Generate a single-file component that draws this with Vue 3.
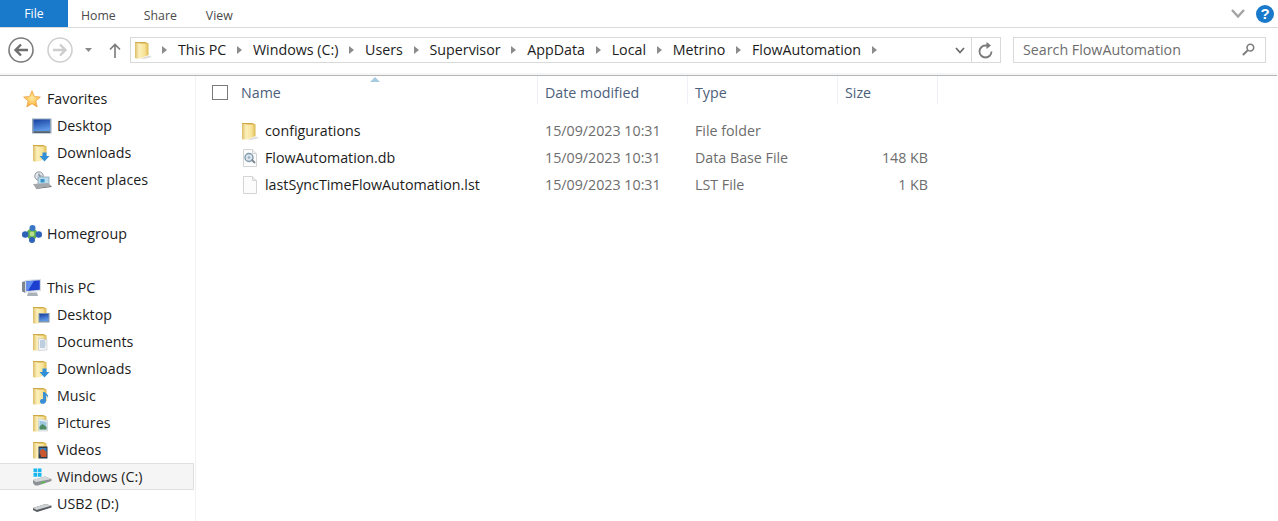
<script setup>
const crumbs = ['This PC', 'Windows (C:)', 'Users', 'Supervisor', 'AppData', 'Local', 'Metrino', 'FlowAutomation']
const tree = [
  { label: 'Favorites', icon: 'star', top: true },
  { label: 'Desktop', icon: 'monitor' },
  { label: 'Downloads', icon: 'f-down' },
  { label: 'Recent places', icon: 'recent' },
  { spacer: true },
  { label: 'Homegroup', icon: 'home', top: true },
  { spacer: true },
  { label: 'This PC', icon: 'pc', top: true },
  { label: 'Desktop', icon: 'f-desk' },
  { label: 'Documents', icon: 'f-doc' },
  { label: 'Downloads', icon: 'f-down' },
  { label: 'Music', icon: 'f-music' },
  { label: 'Pictures', icon: 'f-pic' },
  { label: 'Videos', icon: 'f-vid' },
  { label: 'Windows (C:)', icon: 'drive-c', selected: true },
  { label: 'USB2 (D:)', icon: 'drive-d' }
]
const files = [
  { name: 'configurations', icon: 'folder', date: '15/09/2023 10:31', type: 'File folder', size: '' },
  { name: 'FlowAutomation.db', icon: 'dbfile', date: '15/09/2023 10:31', type: 'Data Base File', size: '148 KB' },
  { name: 'lastSyncTimeFlowAutomation.lst', icon: 'blank', date: '15/09/2023 10:31', type: 'LST File', size: '1 KB' }
]
</script>

<template>
  <div class="window">
    <svg class="defs" width="0" height="0">
      <defs>
        <linearGradient id="fg" x1="0" y1="0" x2="1" y2="0">
          <stop offset="0" stop-color="#dcbd66" /><stop offset="0.3" stop-color="#fcf0bc" /><stop offset="0.72" stop-color="#f7e296" /><stop offset="1" stop-color="#dcb850" />
        </linearGradient>
        <linearGradient id="scr" x1="0" y1="0" x2="0.3" y2="1">
          <stop offset="0" stop-color="#17409f" /><stop offset="1" stop-color="#5c97e6" />
        </linearGradient>
        <radialGradient id="starg" cx="0.5" cy="0.45" r="0.55">
          <stop offset="0" stop-color="#fdeaa2" /><stop offset="0.6" stop-color="#fbc85c" /><stop offset="1" stop-color="#f2a044" />
        </radialGradient>
        <symbol id="folderbase" viewBox="0 0 18 18">
          <path d="M1 1 H11 L14.5 2.5 V14 L6.5 17.5 H2 Q1 17.5 1 16.5 Z" fill="url(#fg)" />
          <path d="M1 1 H11 L14.5 2.5 H6 L4 2 H1 Z" fill="#cfa945" />
        </symbol>
        <symbol id="folder" viewBox="0 0 18 18">
          <path d="M7 17.5 L15 14.5 L18 16 L10 18 Z" fill="#dcdcdc" />
          <use href="#folderbase" width="18" height="18" />
        </symbol>
        <symbol id="star" viewBox="0 0 18 18">
          <path d="M9 .8 L11.4 6.4 L17.4 7 L12.9 11 L14.2 17 L9 13.8 L3.8 17 L5.1 11 L.6 7 L6.6 6.4 Z" fill="url(#starg)" stroke="#ec9e42" stroke-width=".7" />
        </symbol>
        <symbol id="monitor" viewBox="0 0 20 18">
          <rect x="0" y="1.5" width="19.5" height="15" fill="#94a6b8" />
          <rect x="1.5" y="2.5" width="16.5" height="11.5" fill="url(#scr)" />
          <rect x="1.5" y="14.4" width="16.5" height="1.4" fill="#44525f" />
        </symbol>
        <symbol id="f-down" viewBox="0 0 20 18">
          <use href="#folderbase" width="18" height="18" />
          <path d="M10.5 8.5 H14.5 V12 H17.5 L12.5 17.5 L7.5 12 H10.5 Z" fill="#2f8fd8" />
        </symbol>
        <symbol id="recent" viewBox="0 0 20 18">
          <circle cx="7" cy="5" r="4.2" fill="#e3e8ec" stroke="#8b959f" />
          <path d="M7 2.5 V5 H9.5" fill="none" stroke="#6d7780" />
          <rect x="6" y="6" width="11" height="7.5" fill="#b9dcee" stroke="#7f98a8" stroke-width=".7" />
          <rect x="8.5" y="8" width="4" height="3.5" fill="#3c93c9" />
          <path d="M1 13 L16 12 L19.5 15 L4 17.5 Z" fill="#a6a9ac" />
          <path d="M4 17.5 L19.5 15 V16 L4 18 Z" fill="#5f6468" />
        </symbol>
        <symbol id="home" viewBox="0 0 20 18">
          <circle cx="10" cy="9" r="5.5" fill="#62b254" />
          <circle cx="10.5" cy="3" r="3" fill="#3a76c4" />
          <circle cx="3.2" cy="9.5" r="3.2" fill="#2d62b8" />
          <circle cx="16.8" cy="9.5" r="3.2" fill="#2d62b8" />
          <circle cx="10" cy="15" r="3" fill="#2d62b8" />
          <circle cx="10" cy="9" r="2.4" fill="#b6df8a" />
        </symbol>
        <symbol id="pc" viewBox="0 0 20 18">
          <path d="M0 3 L3.5 2 V14 L0 12.5 Z" fill="#7f878f" />
          <path d="M3 1 L19 0 V12 L3 13.5 Z" fill="#d4dbe2" />
          <path d="M4.5 2.2 L17.8 1.2 V10.8 L4.5 12 Z" fill="#1c3fd0" />
          <path d="M4.5 2.2 L12 1.7 L6 11.8 L4.5 12 Z" fill="#5f8ef0" />
          <path d="M6 13.5 H15 L16 17 H5 Z" fill="#a9b1b8" />
        </symbol>
        <symbol id="f-desk" viewBox="0 0 20 18">
          <use href="#folderbase" width="18" height="18" />
          <rect x="6.5" y="7" width="11" height="9.5" fill="#8096ab" />
          <rect x="7.5" y="8" width="9" height="7" fill="url(#scr)" />
        </symbol>
        <symbol id="f-doc" viewBox="0 0 20 18">
          <use href="#folderbase" width="18" height="18" />
          <path d="M6.5 5 L15 7 V17 L6.5 17.5 Z" fill="#f2f4f6" stroke="#b7bdc2" stroke-width=".5" />
          <path d="M8 8 H13 M8 10 H13.5 M8 12 H13.5 M8 14 H13" stroke="#7ea2c2" stroke-width=".9" />
        </symbol>
        <symbol id="f-music" viewBox="0 0 20 18">
          <use href="#folderbase" width="18" height="18" />
          <path d="M11 5 V12 C7 11 7 17 11 16.8 C14 16.8 14.5 14 14 12 V8.5 C15.5 9 16 10 15.5 11.5 C17.5 9 15 7 12.5 5 Z" fill="#3a8fd6" />
        </symbol>
        <symbol id="f-pic" viewBox="0 0 20 18">
          <use href="#folderbase" width="18" height="18" />
          <path d="M6.5 4.5 L15.5 6.5 V17 H6.5 Z" fill="#eef2f3" stroke="#b7bdc2" stroke-width=".5" />
          <path d="M7.5 6.5 L14.5 8 V15.5 H7.5 Z" fill="#9cc6e0" />
          <path d="M7.5 12.5 L10.5 10 L14.5 13 V15.5 H7.5 Z" fill="#4f8c62" />
        </symbol>
        <symbol id="f-vid" viewBox="0 0 20 18">
          <use href="#folderbase" width="18" height="18" />
          <rect x="6.5" y="5.5" width="9" height="12" fill="#2c3a48" />
          <path d="M7.5 7 H14.5 V13 H7.5 Z" fill="#2e7fc2" />
          <path d="M7.5 10 L11 7.5 L14.5 11 V16 H9 Z" fill="#c9562e" />
        </symbol>
        <symbol id="drive-c" viewBox="0 0 20 18">
          <path d="M1.5 .5 H5 V4.2 H1.5 Z M5.7 .5 H9.5 V4.2 H5.7 Z M1.5 5 H5 V8.7 H1.5 Z M5.7 5 H9.5 V8.7 H5.7 Z" fill="#19b7ee" />
          <path d="M1 12 L13 8.5 L19.5 11 V13 L6 17.5 H3 L1 15 Z" fill="#8d9296" />
          <path d="M1 12 L4 14 L19.5 11 L13 8.5 Z" fill="#d5d8da" />
          <path d="M9 15 L13 14" stroke="#59c14a" stroke-width="1.4" />
        </symbol>
        <symbol id="drive-d" viewBox="0 0 20 18">
          <path d="M1 13 L13.5 9 L19.5 10.8 V12.5 L5 17 L1 15 Z" fill="#55585c" />
          <path d="M1 13 L4.5 15 L19.5 10.8 L13.5 9 Z" fill="#cfd2d4" />
        </symbol>
        <symbol id="blank" viewBox="0 0 18 18">
          <path d="M2.5 .5 H11.5 L15.5 4.5 V17.5 H2.5 Z" fill="#fcfcfc" stroke="#d2d4d6" />
          <path d="M11.5 .5 V4.5 H15.5" fill="#eeeeee" stroke="#d2d4d6" />
        </symbol>
        <symbol id="dbfile" viewBox="0 0 18 18">
          <use href="#blank" width="18" height="18" />
          <circle cx="8" cy="8.5" r="4" fill="#dfe8ee" stroke="#7d99ad" stroke-width="1.4" />
          <path d="M10.5 10.5 L14 14" stroke="#7d8a94" stroke-width="2" />
          <circle cx="8" cy="8.5" r="1.4" fill="#9db7c8" />
        </symbol>
      </defs>
    </svg>

    <header class="ribbon">
      <div class="tab file-tab">File</div>
      <div class="tab home-tab">Home</div>
      <div class="tab share-tab">Share</div>
      <div class="tab view-tab">View</div>
      <div class="ribbon-right">
        <svg class="chev" width="14" height="9" viewBox="0 0 14 9"><path d="M1 1 L7 7.5 L13 1" fill="none" stroke="#a3a3a3" stroke-width="2.4" /></svg>
        <div class="help">?</div>
      </div>
    </header>

    <div class="addressrow">
      <svg class="nav-btn" width="26" height="26" viewBox="0 0 26 26">
        <circle cx="13" cy="13" r="12" fill="#fff" stroke="#7c7c7c" stroke-width="1.6" />
        <path d="M20 13 H8 M13 7.5 L7.5 13 L13 18.5" fill="none" stroke="#6e6e6e" stroke-width="2.4" />
      </svg>
      <svg class="nav-btn fwd" width="26" height="26" viewBox="0 0 26 26">
        <circle cx="13" cy="13" r="12" fill="#fff" stroke="#cfcfcf" stroke-width="1.6" />
        <path d="M6 13 H18 M13 7.5 L18.5 13 L13 18.5" fill="none" stroke="#cdcdcd" stroke-width="2.4" />
      </svg>
      <svg class="recent-caret" width="7" height="4" viewBox="0 0 7 4"><path d="M0 0 H7 L3.5 4 Z" fill="#8a8a8a" /></svg>
      <svg class="up" width="12" height="15" viewBox="0 0 12 15"><path d="M6 15 V2 M1 6.5 L6 1.5 L11 6.5" fill="none" stroke="#7a7a7a" stroke-width="1.6" /></svg>
      <div class="addressbox">
        <svg class="addr-folder" width="18" height="18"><use href="#folder" /></svg>
        <template v-for="c in crumbs" :key="c">
          <svg class="arrow" width="5" height="8" viewBox="0 0 5 8"><path d="M0 0 L5 4 L0 8 Z" fill="#8c8c8c" /></svg>
          <span class="crumb">{{ c }}</span>
        </template>
        <svg class="arrow" width="5" height="8" viewBox="0 0 5 8"><path d="M0 0 L5 4 L0 8 Z" fill="#8c8c8c" /></svg>
        <div class="addr-end">
          <div class="addr-drop">
            <svg width="10" height="7" viewBox="0 0 10 7"><path d="M1 1 L5 5.5 L9 1" fill="none" stroke="#6a6a6a" stroke-width="1.7" /></svg>
          </div>
          <div class="addr-refresh">
            <svg width="16" height="17" viewBox="0 0 16 17">
              <path d="M13.5 9.5 A6 6 0 1 1 7.5 3.5 H10" fill="none" stroke="#7a7a7a" stroke-width="1.8" />
              <path d="M8.5 0 L13 3.5 L8.5 7 Z" fill="#7a7a7a" />
            </svg>
          </div>
        </div>
      </div>
      <div class="searchbox">
        <span>Search FlowAutomation</span>
        <svg width="13" height="13" viewBox="0 0 14 14">
          <circle cx="9" cy="5" r="3.6" fill="none" stroke="#7d7d7d" stroke-width="1.7" />
          <path d="M6.3 7.7 L1 13" stroke="#7d7d7d" stroke-width="2.2" />
        </svg>
      </div>
    </div>
    <div class="strip"></div>

    <div class="main">
      <nav class="sidebar">
        <template v-for="(t, i) in tree" :key="i">
          <div v-if="t.spacer" class="tree-row"></div>
          <div v-else class="tree-row" :class="{ top: t.top, selected: t.selected }">
            <svg class="tree-icon" width="20" height="18"><use :href="'#' + t.icon" /></svg>
            <span>{{ t.label }}</span>
          </div>
        </template>
      </nav>
      <section class="content">
        <svg class="sort" width="10" height="5" viewBox="0 0 10 5"><path d="M5 0 L10 5 H0 Z" fill="#a9cbe2" /></svg>
        <div class="columns">
          <div class="col col-name"><span class="check"></span><span>Name</span></div>
          <div class="col col-date">Date modified</div>
          <div class="col col-type">Type</div>
          <div class="col col-size">Size</div>
        </div>
        <div class="rows">
          <div v-for="f in files" :key="f.name" class="row">
            <div class="cell col-name name-cell">
              <svg width="18" height="18"><use :href="'#' + f.icon" /></svg>
              <span>{{ f.name }}</span>
            </div>
            <div class="cell col-date muted">{{ f.date }}</div>
            <div class="cell col-type muted">{{ f.type }}</div>
            <div class="cell col-size muted right">{{ f.size }}</div>
          </div>
        </div>
      </section>
    </div>
  </div>
</template>

<style scoped>
.window { width: 1278px; height: 521px; overflow: hidden; background: #fff; font-family: "Open Sans", "Noto Sans", sans-serif; font-size: 14.25px; color: #1c1c1c; display: flex; flex-direction: column; }
.defs { position: absolute; }
.ribbon { height: 27px; flex: none; display: flex; border-bottom: 1px solid #dadbdc; box-sizing: content-box; font-size: 12.3px; color: #4a4a4a; }
.tab { line-height: 31px; }
.file-tab { width: 68px; height: 27px; background: #1979ca; color: #fff; text-align: center; line-height: 27px; }
.home-tab { margin-left: 13px; }
.share-tab { margin-left: 28px; }
.view-tab { margin-left: 29px; }
.ribbon-right { margin-left: auto; display: flex; align-items: center; gap: 11px; padding-right: 4px; height: 27px; }
.help { width: 18px; height: 18px; border-radius: 50%; background: #1979ca; color: #fff; font: bold 15px/18px "Liberation Sans", sans-serif; text-align: center; }
.addressrow { height: 45px; flex: none; display: flex; align-items: center; box-sizing: border-box; padding: 0 12px 1px 8px; }
.nav-btn { flex: none; }
.fwd { margin-left: 13px; }
.recent-caret { margin-left: 12px; flex: none; }
.up { margin-left: 17px; margin-right: 9px; flex: none; }
.addressbox { width: 871px; height: 26px; box-sizing: border-box; border: 1px solid #d9d9d9; display: flex; align-items: center; padding-left: 3px; flex: none; }
.addr-folder { flex: none; margin-right: 10px; }
.arrow { flex: none; }
.crumb { margin: 0 10.7px 0 11px; padding-bottom: 1px; white-space: nowrap; color: #1c1c1c; }
.addr-end { margin-left: auto; display: flex; height: 100%; }
.addr-drop { width: 22px; display: flex; align-items: center; justify-content: center; border-right: 1px solid #d9d9d9; }
.addr-refresh { width: 28px; display: flex; align-items: center; justify-content: center; }
.searchbox { margin-left: 12px; width: 253px; height: 26px; box-sizing: border-box; border: 1px solid #d9d9d9; display: flex; align-items: center; justify-content: space-between; padding: 0 10px 1px 9px; color: #6d6d6d; flex: none; }
.strip { flex: none; background: #f5f6f7; border-bottom: 1px solid #b5b5b5; box-sizing: content-box; height: 2px; width: 1277px; }
.main { flex: 1; display: flex; min-height: 0; }
.sidebar { width: 195px; flex: none; box-sizing: content-box; border-right: 1px solid #f2f2f2; padding-top: 9px; }
.tree-row { height: 27px; display: flex; align-items: center; padding-left: 32px; gap: 5px; box-sizing: border-box; white-space: nowrap; width: 194px; }
.tree-row.top { padding-left: 22px; }
.tree-row.selected { background: #f5f5f5; border: 1px solid #e0e0e0; border-left: 0; }
.tree-icon { flex: none; }
.content { position: relative; flex: 1; }
.sort { position: absolute; left: 174px; top: 1px; }
.columns { display: flex; height: 27px; color: #4c607a; }
.col-name { width: 341px; flex: none; }
.col-date { width: 150px; flex: none; }
.col-type { width: 150px; flex: none; }
.col-size { width: 100px; flex: none; }
.col { box-sizing: border-box; display: flex; align-items: center; padding-left: 7px; border-right: 1px solid #eef1f5; padding-top: 4px; height: 28px; }
.col-name.col { width: 342px; padding-left: 16px; gap: 13px; }
.check { width: 16px; height: 15px; border: 1px solid #7a7a7a; box-sizing: border-box; display: block; margin-top: 1px; }
.rows { padding-top: 14px; }
.row { display: flex; height: 27px; align-items: center; }
.cell { box-sizing: border-box; padding-left: 8px; white-space: nowrap; }
.name-cell { padding-left: 45px; display: flex; align-items: center; gap: 6px; }
.name-cell svg { flex: none; }
.muted { color: #6d6d6d; }
.right { text-align: right; padding-right: 9px; }
</style>

<style>
html, body { margin: 0; padding: 0; background: #fff; }
</style>
